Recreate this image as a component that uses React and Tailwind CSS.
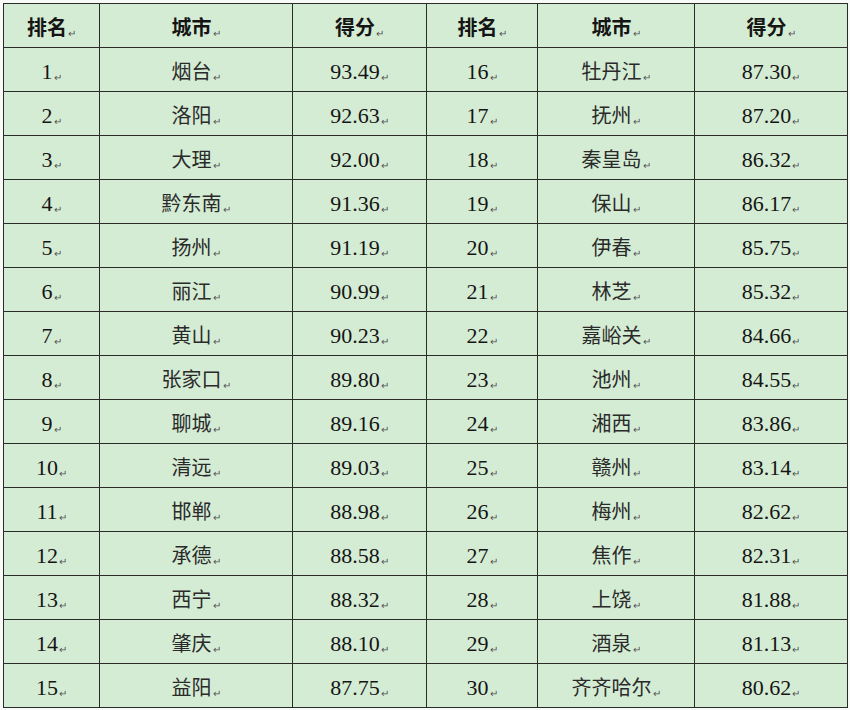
const rows = [
  ['1', '烟台', '93.49', '16', '牡丹江', '87.30'],
  ['2', '洛阳', '92.63', '17', '抚州', '87.20'],
  ['3', '大理', '92.00', '18', '秦皇岛', '86.32'],
  ['4', '黔东南', '91.36', '19', '保山', '86.17'],
  ['5', '扬州', '91.19', '20', '伊春', '85.75'],
  ['6', '丽江', '90.99', '21', '林芝', '85.32'],
  ['7', '黄山', '90.23', '22', '嘉峪关', '84.66'],
  ['8', '张家口', '89.80', '23', '池州', '84.55'],
  ['9', '聊城', '89.16', '24', '湘西', '83.86'],
  ['10', '清远', '89.03', '25', '赣州', '83.14'],
  ['11', '邯郸', '88.98', '26', '梅州', '82.62'],
  ['12', '承德', '88.58', '27', '焦作', '82.31'],
  ['13', '西宁', '88.32', '28', '上饶', '81.88'],
  ['14', '肇庆', '88.10', '29', '酒泉', '81.13'],
  ['15', '益阳', '87.75', '30', '齐齐哈尔', '80.62'],
];

const headers = ['排名', '城市', '得分', '排名', '城市', '得分'];
const widths = ['w-[96px]', 'w-[193px]', 'w-[134px]', 'w-[111px]', 'w-[157px]', 'w-[153px]'];

const Mark = () => <span className="ml-px align-[-2px] text-[10px] font-normal text-[#555]">↵</span>;

export default function App() {
  return (
    <div className="h-[710px] w-[850px] bg-[#f7faf6] pl-[3px] pt-[3px] font-['Liberation_Serif','Noto_Sans_CJK_SC',serif] text-[#151515]">
      <table className="w-[845px] table-fixed border-collapse bg-[#d5ecd4]">
        <colgroup>
          {widths.map((w, i) => (
            <col key={i} className={w} />
          ))}
        </colgroup>
        <thead>
          <tr className="h-[44px]">
            {headers.map((h, i) => (
              <th key={i} className="border-[1.5px] border-[#2b2b2b] pt-1 text-center text-[20px] font-bold">
                {h}
                <Mark />
              </th>
            ))}
          </tr>
        </thead>
        <tbody>
          {rows.map((r) => (
            <tr key={r[0]} className="h-[44px]">
              {r.map((c, i) => (
                <td
                  key={i}
                  className={`border-[1.5px] border-[#2b2b2b] pt-1 text-center ${
                    i % 3 === 1 ? 'text-[20px] text-[#2a2a2a]' : 'text-[22px]'
                  }`}
                >
                  {c}
                  <Mark />
                </td>
              ))}
            </tr>
          ))}
        </tbody>
      </table>
    </div>
  );
}
